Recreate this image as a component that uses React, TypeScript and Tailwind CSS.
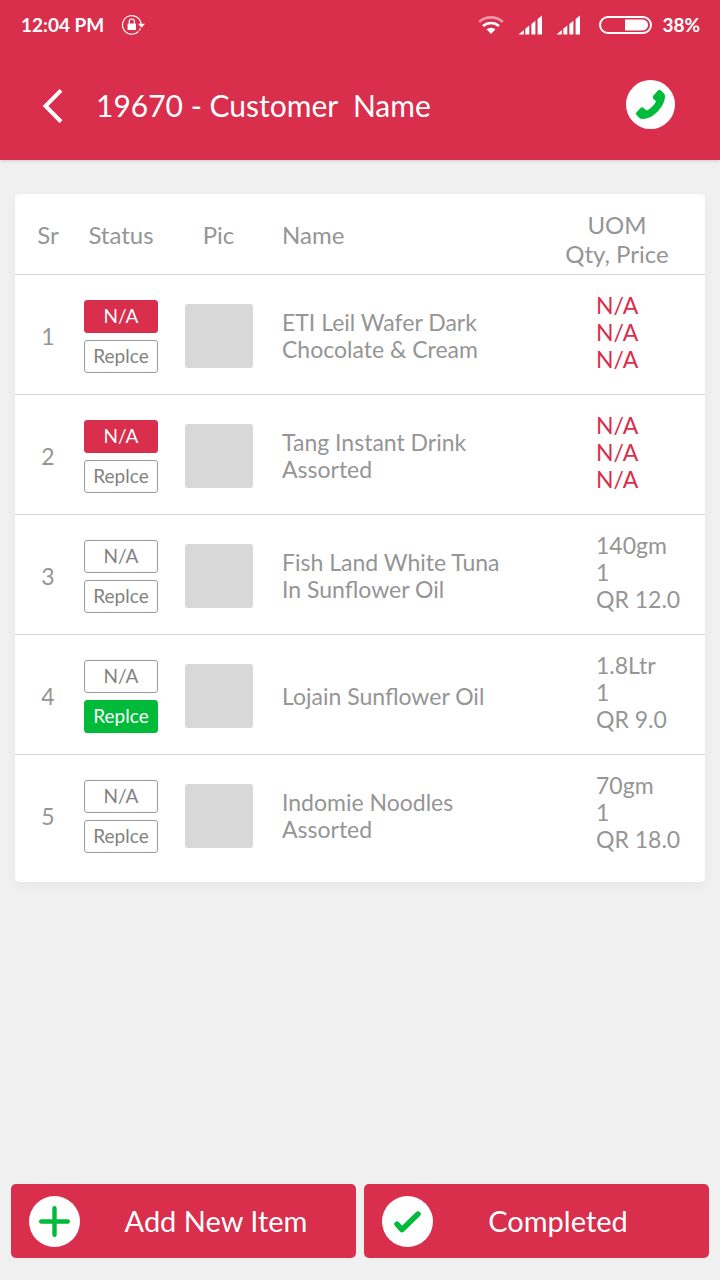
import type { ReactNode } from "react";

type Status = "na" | "replace" | null;

interface Item {
  sr: number;
  status: Status;
  name: string;
  details: [string, string, string];
}

const items: Item[] = [
  { sr: 1, status: "na", name: "ETI Leil Wafer Dark Chocolate & Cream", details: ["N/A", "N/A", "N/A"] },
  { sr: 2, status: "na", name: "Tang Instant Drink Assorted", details: ["N/A", "N/A", "N/A"] },
  { sr: 3, status: null, name: "Fish Land White Tuna In Sunflower Oil", details: ["140gm", "1", "QR 12.0"] },
  { sr: 4, status: "replace", name: "Lojain Sunflower Oil", details: ["1.8Ltr", "1", "QR 9.0"] },
  { sr: 5, status: null, name: "Indomie Noodles Assorted", details: ["70gm", "1", "QR 18.0"] },
];

function RotationLockIcon() {
  return (
    <svg width="24" height="22" viewBox="0 0 24 22" fill="none" aria-hidden="true">
      <path d="M19.1 10.4A9.3 9.3 0 1 0 16.4 17.5M17.2 16.6A9.3 9.3 0 0 0 18.4 14.6" stroke="white" strokeWidth="1.2" />
      <path d="M16 9.8h7l-3.5 4z" fill="white" />
      <rect x="5.600" y="9.400" width="8.400" height="6.600" rx="0.6" fill="white" />
      <path d="M7.2 9.800V7.600a2.600 2.600 0 0 1 5.200 0v2.200" stroke="white" strokeWidth="1.2" />
    </svg>
  );
}

function WifiIcon() {
  return (
    <svg width="26" height="20" viewBox="0 0 26 20" fill="none" aria-hidden="true">
      <path d="M1.2 7a17.500 17.500 0 0 1 23.600 0" stroke="white" strokeOpacity="0.5" strokeWidth="2.8" />
      <path d="M5 11a12 12 0 0 1 16 0" stroke="white" strokeWidth="2.6" />
      <path d="M8.500 14.300a7 7 0 0 1 9 0L13 19z" fill="white" />
    </svg>
  );
}

function SignalIcon() {
  return (
    <svg width="24" height="20" viewBox="0 0 24 20" fill="white" aria-hidden="true">
      <path d="M0.500 19.500l5.300-4.600V19.500zM7.300 13.700l4-3.200V19.500h-4zM13.400 9l4-3.300V19.500h-4zM19.600 4L24 0.500V19.500h-4.400z" />
    </svg>
  );
}

function BatteryIcon() {
  return (
    <svg width="53" height="18" viewBox="0 0 53 18" fill="none" aria-hidden="true">
      <rect x="1" y="1" width="51" height="16" rx="8" stroke="white" strokeWidth="2" />
      <path d="M26 3.5h17.5a5.5 5.5 0 0 1 0 11H26z" fill="white" />
    </svg>
  );
}

function PhoneIcon() {
  return (
    <svg width="49" height="49" viewBox="0 0 49 49" fill="#00ba3a" aria-hidden="true">
      <path d="M32 10.400Q33.500 9.200 34.900 10.400L38 13.400Q39 14.500 39 16C39.100 20.600 36.800 26 32.400 30.700C27.800 35.700 22.600 38.700 17.200 39Q14.800 39.200 13.400 37.900L10.500 35Q9.300 33.700 10.500 32.300L14.700 27.900Q16.200 26.600 17.600 27.900L20.400 30.600C24.200 29.200 28.500 25 30 21.300L27.300 18.700Q26 17.300 27.200 15.800Z" />
    </svg>
  );
}

function StatusButton({ active, children }: { active?: "red" | "green"; children: ReactNode }) {
  const tone =
    active === "red"
      ? "border-[#d92e4c] bg-[#d92e4c] text-white"
      : active === "green"
        ? "border-[#00ba3a] bg-[#00ba3a] text-white"
        : "border-[#999999] bg-white text-[#828282]";
  return (
    <button type="button" aria-pressed={Boolean(active)} className={`block h-[33px] w-[74px] rounded-[3px] border text-[19px] leading-6 ${tone}`}>
      {children}
    </button>
  );
}

function ActionButton({ icon, label, space }: { icon: ReactNode; label: string; space: string }) {
  return (
    <button type="button" className="flex h-[74px] flex-1 items-center rounded-[5px] bg-[#d92e4c] pl-[18px] text-[29px] text-white">
      <span className="flex size-[51px] shrink-0 items-center justify-center rounded-full bg-white">{icon}</span>
      <span className={`flex-1 text-center ${space}`}>{label}</span>
    </button>
  );
}

export default function App() {
  return (
    <div className="flex min-h-screen flex-col bg-[#f0f0f0] font-['Lato',sans-serif] text-[#959595]">
      <header className="bg-[#d92e4c] text-white shadow-[0_1px_3px_rgba(0,0,0,0.15)]">
        <div className="flex h-[50px] items-center justify-between pl-[21px] pr-5 text-[19px] font-bold">
          <div className="flex items-center gap-[18px]">
            <span>12:04 PM</span>
            <RotationLockIcon />
          </div>
          <div className="flex items-center">
            <span className="flex items-center gap-[14px]">
              <WifiIcon />
              <SignalIcon />
              <SignalIcon />
            </span>
            <span className="ml-[19px] flex items-center gap-[10px]">
              <BatteryIcon />
              <span>38%</span>
            </span>
          </div>
        </div>
        <div className="flex h-[110px] items-center pl-[42px] pr-[45px]">
          <button type="button" aria-label="Back" className="shrink-0">
            <svg width="22" height="36" viewBox="0 0 22 36" fill="none" aria-hidden="true">
              <path d="M19 3.300L3.500 19L19 34.700" stroke="white" strokeWidth="4" />
            </svg>
          </button>
          <h1 className="flex-1 whitespace-pre pl-8 text-[30px]">19670 - Customer  Name</h1>
          <button type="button" aria-label="Call customer" className="mb-[2px] shrink-0 rounded-full bg-white">
            <PhoneIcon />
          </button>
        </div>
      </header>

      <main className="px-[15px] pt-[34px]">
        <div className="rounded-[5px] bg-white pb-2 shadow-[0_4px_12px_rgba(0,0,0,0.04)]">
          <table className="w-full table-fixed">
            <colgroup>
              <col className="w-[66px]" />
              <col className="w-[80px]" />
              <col className="w-[115px]" />
              <col />
              <col className="w-[176px]" />
            </colgroup>
            <thead>
              <tr className="h-20 text-[24px] leading-[29px]">
                <th scope="col" className="pt-[2px] font-normal">Sr</th>
                <th scope="col" className="pt-[2px] font-normal">Status</th>
                <th scope="col" className="pt-[2px] font-normal">Pic</th>
                <th scope="col" className="pl-[6px] pt-[2px] text-left font-normal">Name</th>
                <th scope="col" className="pt-[10px] font-normal">
                  UOM
                  <br />
                  Qty, Price
                </th>
              </tr>
            </thead>
            <tbody>
              {items.map((item) => (
                <tr key={item.sr} className="h-[120px] border-t border-[#d8d8d8] text-[23px] leading-[27px]">
                  <td className="pt-1 text-center">{item.sr}</td>
                  <td className="pt-1">
                    <div className="flex flex-col items-center gap-[7px]">
                      <StatusButton active={item.status === "na" ? "red" : undefined}>N/A</StatusButton>
                      <StatusButton active={item.status === "replace" ? "green" : undefined}>Replce</StatusButton>
                    </div>
                  </td>
                  <td className="pt-1">
                    <div className="mx-auto h-16 w-[68px] rounded-[3px] bg-[#d8d8d8]" />
                  </td>
                  <td className="pl-[6px] pr-4 pt-1">{item.name}</td>
                  <td className={item.status === "na" ? "pb-[3px] pl-[67px] text-[#d92e4c]" : "pb-[3px] pl-[67px]"}>
                    {item.details.map((detail, index) => (
                      <div key={index}>{detail}</div>
                    ))}
                  </td>
                </tr>
              ))}
            </tbody>
          </table>
        </div>
      </main>

      <footer className="mt-auto flex gap-2 px-[11px] pb-[22px] pt-6">
        <ActionButton
          label="Add New Item"
          space="pr-1"
          icon={
            <svg width="51" height="51" viewBox="0 0 51 51" fill="none" aria-hidden="true">
              <path d="M25.500 12.200v26.600M12.200 25.500h26.600" stroke="#00ba3a" strokeWidth="4.400" strokeLinecap="round" />
            </svg>
          }
        />
        <ActionButton
          label="Completed"
          space="pr-[26px]"
          icon={
            <svg width="51" height="51" viewBox="0 0 51 51" fill="none" aria-hidden="true">
              <path d="M15 28l4.900 5.700L36 18" stroke="#00ba3a" strokeWidth="5.400" strokeLinecap="round" strokeLinejoin="round" />
            </svg>
          }
        />
      </footer>
    </div>
  );
}
